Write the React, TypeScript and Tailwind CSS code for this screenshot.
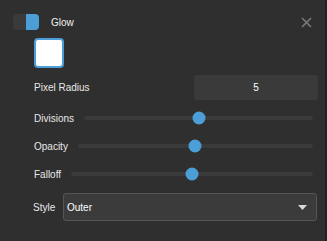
const font = { fontFamily: '"Liberation Sans", Arial, sans-serif' };

const Slider = ({ label, value }: { label: string; value: number }) => (
  <div className="flex items-center h-[28px] pl-[34px] pr-[12px]">
    <span className="text-[10px] text-[#e8e8e8] mr-[10px]">{label}</span>
    <div className="relative flex-1 h-[4px] rounded-full bg-[#3a3a3a]">
      <div
        className="absolute top-1/2 -translate-y-1/2 -translate-x-1/2 w-[13px] h-[13px] rounded-full bg-[#4b9fd6]"
        style={{ left: `calc(6px + ${value} * (100% - 12px))` }}
      />
    </div>
  </div>
);

export default function App() {
  return (
    <div className="w-[327px] h-[241px] bg-[#2f2f2f] border-r-2 border-[#232323] flex flex-col" style={font}>
      {/* header */}
      <div className="flex items-center h-[16px] mt-[14px] pl-[13px] pr-[13px]">
        <div className="flex w-[26px] h-[16px] rounded-[4px] overflow-hidden">
          <div className="w-[13px] bg-[#3a3a3a]" />
          <div className="w-[13px] bg-[#4b9fd6]" />
        </div>
        <span className="ml-[12px] text-[10px] text-[#f0f0f0]">Glow</span>
        <svg className="ml-auto" width="11" height="11" viewBox="0 0 11 11">
          <path d="M1 1L10 10M10 1L1 10" stroke="#7a7a7a" strokeWidth="1.6" />
        </svg>
      </div>

      {/* color swatch */}
      <div className="ml-[34px] mt-[8px] w-[30px] h-[30px] rounded-[4px] border-2 border-[#4b9fd6] bg-white" />

      {/* pixel radius */}
      <div className="flex items-center mt-[7px] pl-[34px] pr-[7px]">
        <span className="text-[10px] text-[#e8e8e8]">Pixel Radius</span>
        <div className="ml-auto w-[124px] h-[25px] rounded-[3px] bg-[#3a3a3a] flex items-center justify-center text-[10px] text-white">
          5
        </div>
      </div>

      <div className="mt-[4px]">
        <Slider label="Divisions" value={0.5} />
        <Slider label="Opacity" value={0.5} />
        <Slider label="Falloff" value={0.5} />
      </div>

      {/* style */}
      <div className="flex items-center mt-[5px] pl-[33px] pr-[8px]">
        <span className="text-[10px] text-[#e8e8e8] w-[30px]">Style</span>
        <div className="flex-1 h-[28px] rounded-[3px] border border-[#555555] bg-[#3b3b3b] flex items-center pl-[3px] pr-[9px]">
          <span className="text-[10px] text-white">Outer</span>
          <svg className="ml-auto" width="9" height="5" viewBox="0 0 9 5">
            <path d="M0 0H9L4.5 5Z" fill="#d8d8d8" />
          </svg>
        </div>
      </div>
    </div>
  );
}
